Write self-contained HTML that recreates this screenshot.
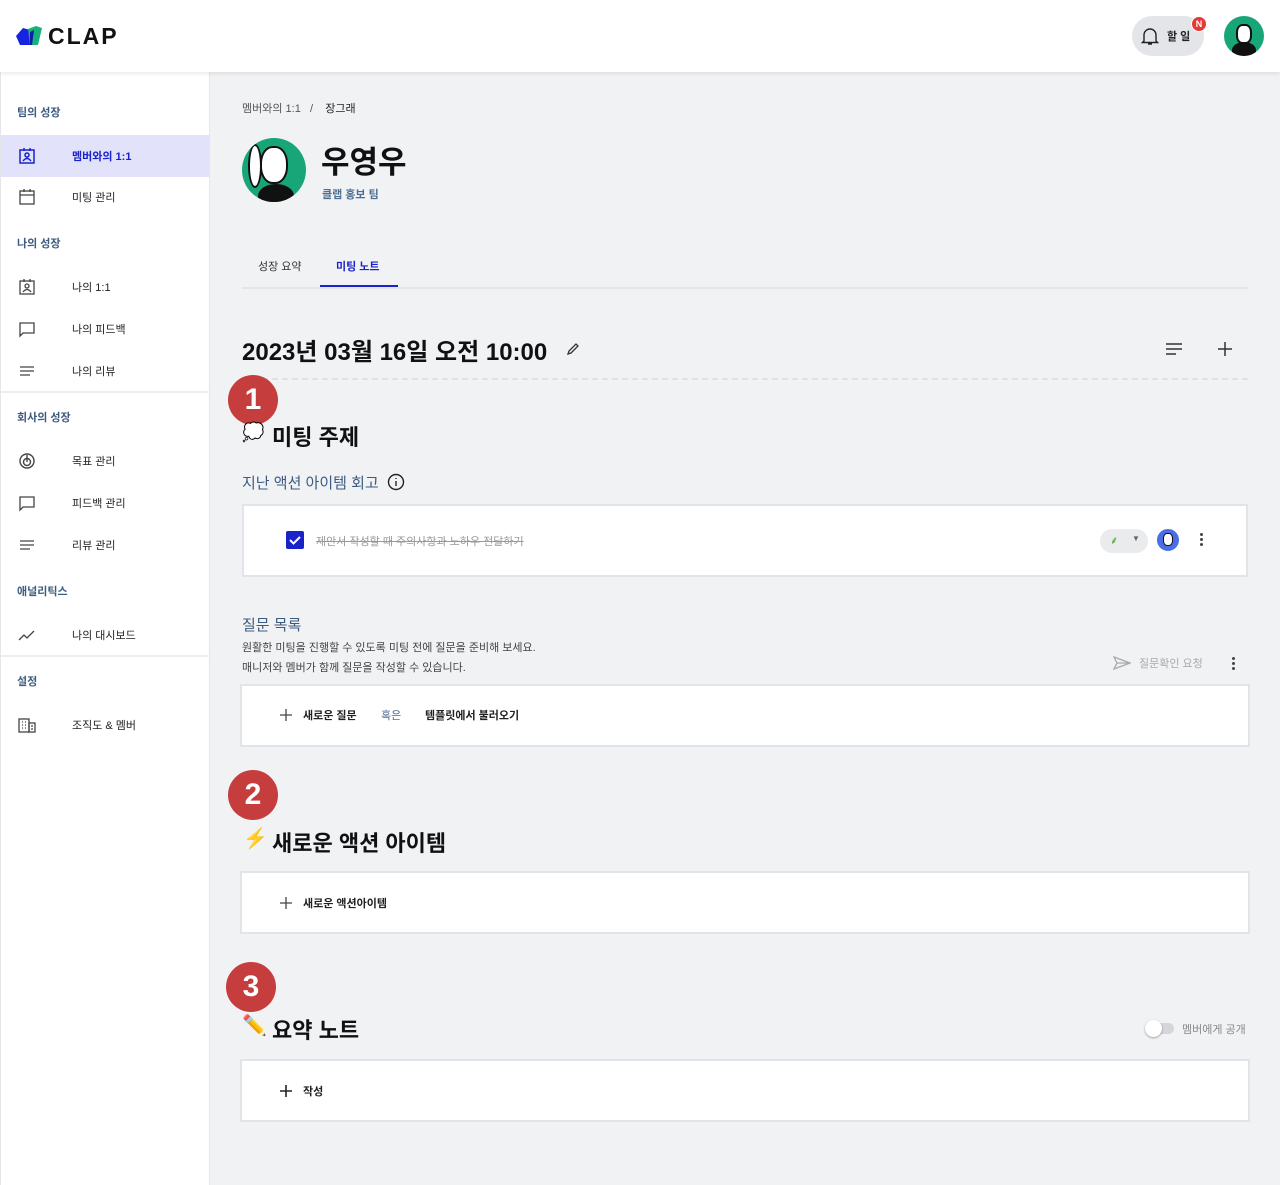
<!DOCTYPE html>
<html><head><meta charset="utf-8"><style>
*{margin:0;padding:0;box-sizing:border-box}
body{width:1280px;height:1185px;position:relative;background:#f1f2f4;font-family:"Liberation Sans","Noto Sans CJK KR",sans-serif;color:#222;overflow:hidden}
.a{position:absolute}
header{position:absolute;left:0;top:0;width:1280px;height:72px;background:#fff;box-shadow:0 2px 4px rgba(0,0,0,.08);z-index:2}
.side{position:absolute;left:0;top:72px;width:210px;height:1113px;background:#fff;border-right:1px solid #e4e6ea;border-left:1px solid #e4e6ea}
.sec{position:absolute;left:16px;font-size:11px;font-weight:bold;color:#3d5b80}
.it{position:absolute;left:0;width:209px;height:42px;font-size:11px;color:#222}
.it span{position:absolute;left:71px;top:13px}
.it svg{position:absolute;left:17px;top:12px}
.hr{position:absolute;left:0;width:209px;height:2px;background:#eceef1}
.box{position:absolute;background:#fff;border:2px solid #e1e4e8}
.badge{position:absolute;width:50px;height:50px;border-radius:50%;background:#c63d3d;color:#fff;font-size:30px;font-weight:bold;text-align:center;line-height:50px}
.h2{position:absolute;font-size:22px;font-weight:bold;color:#111}
.bt{font-size:11px;font-weight:bold;color:#222}
</style></head><body>
<header>
<svg class="a" style="left:16px;top:26px" width="28" height="20" viewBox="0 0 28 20"><polygon points="0,10 7,2 14,4 14,19 4,19" fill="#1524e0"/><polygon points="12,3 20,0 26,2 22,19 14,19" fill="#18b07b"/><polygon points="14,6 18,4 16,19 14,19" fill="#0d1fa8"/></svg>
<div class="a" style="left:48px;top:23px;font-size:23px;font-weight:bold;color:#111;letter-spacing:2px">CLAP</div>
<div class="a" style="left:1132px;top:16px;width:72px;height:40px;border-radius:20px;background:#e3e5e8"></div>
<svg class="a" style="left:1141px;top:27px" width="18" height="19" viewBox="0 0 18 19"><path d="M3 14V8a6 6 0 0 1 12 0v6l1.5 1.5h-15z M7 17h4" fill="none" stroke="#222" stroke-width="1.4"/></svg>
<div class="a bt" style="left:1167px;top:28px">할 일</div>
<div class="a" style="left:1191px;top:16px;width:16px;height:16px;border-radius:50%;background:#e53935;color:#fff;font-size:9px;font-weight:bold;text-align:center;line-height:14px;border:1px solid #fff">N</div>
<div class="a" style="left:1224px;top:16px;width:40px;height:40px;border-radius:50%;background:#18a678;overflow:hidden"><div class="a" style="left:8px;top:26px;width:24px;height:16px;border-radius:50% 50% 0 0;background:#111"></div><div class="a" style="left:12px;top:8px;width:16px;height:20px;border-radius:40%;background:#fff;border:2px solid #111"></div></div>
</header>
<div class="side">
<div class="sec" style="top:32px">팀의 성장</div>
<div class="it" style="top:63px;background:#e2e3fb;color:#1a22c9;font-weight:bold"><svg width="18" height="18" viewBox="0 0 18 18" fill="none" stroke="#1a22c9" stroke-width="1.5"><rect x="2" y="3" width="14" height="13"/><circle cx="9" cy="8" r="2"/><path d="M5 14q4-5 8 0M6 1v3M12 1v3"/></svg><span>멤버와의 1:1</span></div>
<div class="it" style="top:104px"><svg width="18" height="18" viewBox="0 0 18 18" fill="none" stroke="#444" stroke-width="1.3"><rect x="2" y="3" width="14" height="13"/><path d="M2 7h14M6 1v3M12 1v3"/></svg><span>미팅 관리</span></div>
<div class="sec" style="top:163px">나의 성장</div>
<div class="it" style="top:194px"><svg width="18" height="18" viewBox="0 0 18 18" fill="none" stroke="#444" stroke-width="1.3"><rect x="2" y="3" width="14" height="13"/><circle cx="9" cy="8" r="2"/><path d="M5 14q4-5 8 0M6 1v3M12 1v3"/></svg><span>나의 1:1</span></div>
<div class="it" style="top:236px"><svg width="18" height="18" viewBox="0 0 18 18" fill="none" stroke="#444" stroke-width="1.3"><path d="M2 3h14v10H5l-3 3z"/></svg><span>나의 피드백</span></div>
<div class="it" style="top:278px"><svg width="18" height="18" viewBox="0 0 18 18" fill="none" stroke="#444" stroke-width="1.3"><path d="M2 5h14M2 9h14M2 13h10"/></svg><span>나의 리뷰</span></div>
<div class="hr" style="top:319px"></div>
<div class="sec" style="top:337px">회사의 성장</div>
<div class="it" style="top:368px"><svg width="18" height="18" viewBox="0 0 18 18" fill="none" stroke="#444" stroke-width="1.4"><circle cx="9" cy="9" r="7"/><circle cx="9" cy="10" r="3.5"/><path d="M9 3v7"/></svg><span>목표 관리</span></div>
<div class="it" style="top:410px"><svg width="18" height="18" viewBox="0 0 18 18" fill="none" stroke="#444" stroke-width="1.3"><path d="M2 3h14v10H5l-3 3z"/></svg><span>피드백 관리</span></div>
<div class="it" style="top:452px"><svg width="18" height="18" viewBox="0 0 18 18" fill="none" stroke="#444" stroke-width="1.3"><path d="M2 5h14M2 9h14M2 13h10"/></svg><span>리뷰 관리</span></div>
<div class="sec" style="top:511px">애널리틱스</div>
<div class="it" style="top:542px"><svg width="18" height="18" viewBox="0 0 18 18" fill="none" stroke="#444" stroke-width="1.3"><path d="M1 14l5-5 3 3 7-7"/></svg><span>나의 대시보드</span></div>
<div class="hr" style="top:583px"></div>
<div class="sec" style="top:601px">설정</div>
<div class="it" style="top:632px"><svg width="18" height="18" viewBox="0 0 18 18" fill="none" stroke="#444" stroke-width="1.3"><rect x="1" y="3" width="10" height="13"/><rect x="11" y="7" width="6" height="9"/><path d="M4 6h1M7 6h1M4 9h1M7 9h1M4 12h1M7 12h1M13 10h2M13 13h2"/></svg><span>조직도 &amp; 멤버</span></div>
</div>

<div class="a" style="left:242px;top:100px;font-size:11px;color:#555">멤버와의 1:1 &nbsp;&nbsp;/&nbsp;&nbsp;&nbsp; <span style="color:#222">장그래</span></div>
<div class="a" style="left:242px;top:138px;width:64px;height:64px;border-radius:50%;background:#18a678;overflow:hidden"><div class="a" style="left:16px;top:46px;width:36px;height:24px;border-radius:50% 50% 0 0;background:#111"></div><div class="a" style="left:18px;top:8px;width:28px;height:38px;border-radius:45%;background:#fff;border:2px solid #111"></div><div class="a" style="left:6px;top:6px;width:14px;height:44px;border-radius:50%;background:#fff;border:2px solid #111"></div></div>
<div class="a" style="left:321px;top:137px;font-size:31px;font-weight:bold;color:#111">우영우</div>
<div class="a" style="left:322px;top:186px;font-size:11px;font-weight:bold;color:#4d6e92">클랩 홍보 팀</div>
<div class="a" style="left:258px;top:258px;font-size:11px;color:#333">성장 요약</div>
<div class="a" style="left:336px;top:258px;font-size:11px;font-weight:bold;color:#1a22c9">미팅 노트</div>
<div class="a" style="left:242px;top:287px;width:1006px;height:2px;background:#e3e5e8"></div>
<div class="a" style="left:320px;top:285px;width:78px;height:2px;background:#1a22c9"></div>

<div class="a" style="left:242px;top:332px;font-size:24px;font-weight:bold;color:#111">2023년 03월 16일 오전 10:00</div>
<svg class="a" style="left:566px;top:342px" width="14" height="14" viewBox="0 0 14 14" fill="none" stroke="#333" stroke-width="1.3"><path d="M2 12l1-3 7-7 2 2-7 7z"/></svg>
<svg class="a" style="left:1165px;top:342px" width="18" height="14" viewBox="0 0 18 14" stroke="#333" stroke-width="1.5"><path d="M1 2h16M1 7h16M1 12h10"/></svg>
<svg class="a" style="left:1218px;top:342px" width="14" height="14" viewBox="0 0 14 14" stroke="#333" stroke-width="1.5"><path d="M7 0v14M0 7h14"/></svg>
<div class="a" style="left:242px;top:378px;width:1006px;border-top:2px dashed #dfe1e5"></div>

<div class="badge" style="left:228px;top:375px">1</div>
<div class="a" style="left:242px;top:422px;font-size:18px">💭</div>
<div class="h2" style="left:272px;top:420px">미팅 주제</div>
<div class="a" style="left:242px;top:472px;font-size:15px;color:#3d5b80">지난 액션 아이템 회고</div>
<svg class="a" style="left:387px;top:473px" width="18" height="18" viewBox="0 0 18 18" fill="none" stroke="#222" stroke-width="1.4"><circle cx="9" cy="9" r="7.5"/><path d="M9 8v5M9 5v1"/></svg>
<div class="box" style="left:242px;top:504px;width:1006px;height:73px"></div>
<div class="a" style="left:286px;top:531px;width:18px;height:18px;border-radius:2px;background:#1a22c9"><svg width="18" height="18" viewBox="0 0 18 18" fill="none" stroke="#fff" stroke-width="2"><path d="M4 9l3.5 3.5L14 6"/></svg></div>
<div class="a" style="left:316px;top:533px;font-size:11px;color:#999;text-decoration:line-through">제안서 작성할 때 주의사항과 노하우 전달하기</div>
<div class="a" style="left:1100px;top:529px;width:48px;height:24px;border-radius:12px;background:#eaebec"></div>
<div class="a" style="left:1110px;top:533px;font-size:11px;color:#3c9c2a">⸙</div>
<div class="a" style="left:1132px;top:534px;font-size:8px;color:#666">▼</div>
<div class="a" style="left:1156px;top:528px;width:24px;height:24px;border-radius:50%;background:#4a6ee8;border:1px solid #fff"><div class="a" style="left:6px;top:4px;width:10px;height:13px;border-radius:40%;background:#fff;border:1.5px solid #111"></div></div>
<div class="a" style="left:1200px;top:533px;width:4px;font-size:0"><div style="width:3px;height:3px;background:#444;border-radius:50%;margin-bottom:2px"></div><div style="width:3px;height:3px;background:#444;border-radius:50%;margin-bottom:2px"></div><div style="width:3px;height:3px;background:#444;border-radius:50%"></div></div>

<div class="a" style="left:242px;top:614px;font-size:15px;color:#3d5b80">질문 목록</div>
<div class="a" style="left:242px;top:638px;font-size:11px;color:#444;line-height:20px">원활한 미팅을 진행할 수 있도록 미팅 전에 질문을 준비해 보세요.<br>매니저와 멤버가 함께 질문을 작성할 수 있습니다.</div>
<svg class="a" style="left:1113px;top:656px" width="18" height="14" viewBox="0 0 18 14" fill="none" stroke="#aaa" stroke-width="1.3"><path d="M1 1l16 6-16 6 3-6z M4 7h13"/></svg>
<div class="a" style="left:1139px;top:655px;font-size:11px;color:#aaa">질문확인 요청</div>
<div class="a" style="left:1232px;top:657px;font-size:0"><div style="width:3px;height:3px;background:#444;border-radius:50%;margin-bottom:2px"></div><div style="width:3px;height:3px;background:#444;border-radius:50%;margin-bottom:2px"></div><div style="width:3px;height:3px;background:#444;border-radius:50%"></div></div>
<div class="box" style="left:240px;top:684px;width:1010px;height:63px"></div>
<svg class="a" style="left:280px;top:709px" width="12" height="12" viewBox="0 0 12 12" stroke="#444" stroke-width="1.3"><path d="M6 0v12M0 6h12"/></svg>
<div class="a bt" style="left:303px;top:707px">새로운 질문</div>
<div class="a" style="left:381px;top:707px;font-size:11px;color:#4d6e92">혹은</div>
<div class="a bt" style="left:425px;top:707px">템플릿에서 불러오기</div>

<div class="badge" style="left:228px;top:770px">2</div>
<div class="a" style="left:243px;top:826px;font-size:20px;color:#f5a800">⚡</div>
<div class="h2" style="left:272px;top:826px">새로운 액션 아이템</div>
<div class="box" style="left:240px;top:871px;width:1010px;height:63px"></div>
<svg class="a" style="left:280px;top:897px" width="12" height="12" viewBox="0 0 12 12" stroke="#444" stroke-width="1.3"><path d="M6 0v12M0 6h12"/></svg>
<div class="a bt" style="left:303px;top:895px">새로운 액션아이템</div>

<div class="badge" style="left:226px;top:962px">3</div>
<div class="a" style="left:242px;top:1013px;font-size:20px">✏️</div>
<div class="h2" style="left:272px;top:1013px">요약 노트</div>
<div class="a" style="left:1146px;top:1023px;width:28px;height:11px;border-radius:6px;background:#d4d6d9"></div>
<div class="a" style="left:1145px;top:1020px;width:17px;height:17px;border-radius:50%;background:#fff;box-shadow:0 1px 2px rgba(0,0,0,.35)"></div>
<div class="a" style="left:1182px;top:1021px;font-size:11px;color:#888">멤버에게 공개</div>
<div class="box" style="left:240px;top:1059px;width:1010px;height:63px"></div>
<svg class="a" style="left:280px;top:1085px" width="12" height="12" viewBox="0 0 12 12" stroke="#222" stroke-width="1.6"><path d="M6 0v12M0 6h12"/></svg>
<div class="a bt" style="left:303px;top:1083px">작성</div>
</body></html>
